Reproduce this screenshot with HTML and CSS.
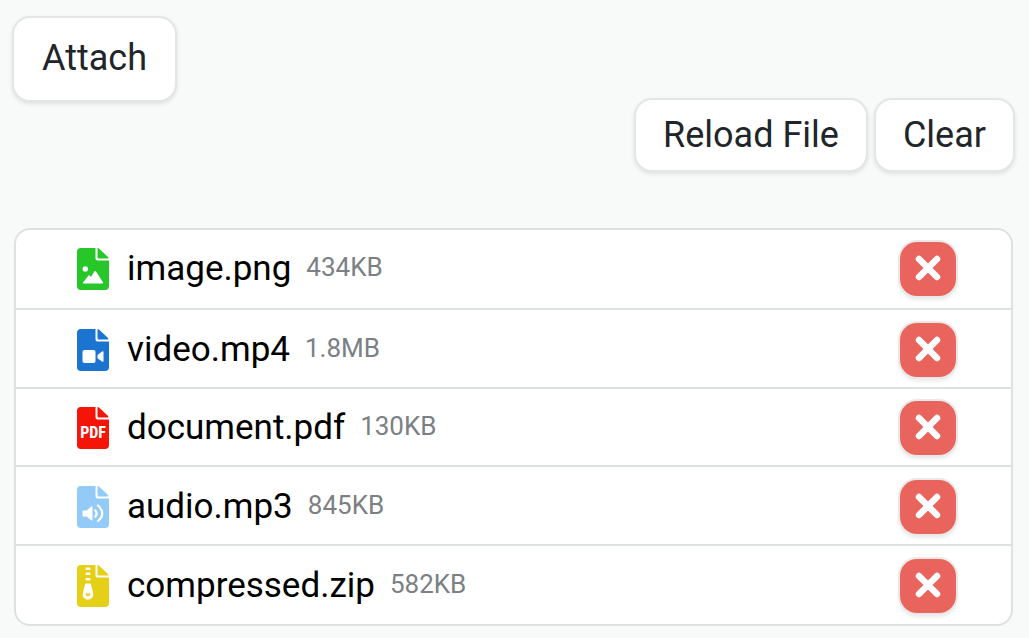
FILE: index.html
```
<!DOCTYPE html>
<html lang="en">
<head>
<meta charset="utf-8">
<meta name="viewport" content="width=device-width, initial-scale=1">
<title>Attachments</title>
<link rel="stylesheet" href="styles.css">
</head>
<body>
<svg class="defs" aria-hidden="true">
  <symbol id="page" viewBox="0 0 32 42">
    <path d="M4 0H18.500V10.500Q18.500 12.500 20.500 12.500H32V38Q32 42 28 42H4Q0 42 0 38V4Q0 0 4 0Z"/>
    <path d="M20.500 0Q21.500 0 22.500 1L31 9Q32 10.500 31 10.500H22Q20.500 10.500 20.500 9Z"/>
  </symbol>
  <symbol id="cross" viewBox="0 0 26 26">
    <path d="M4 4L22 22M22 4L4 22" fill="none" stroke="#fff" stroke-width="6.5" stroke-linecap="round"/>
  </symbol>
</svg>
<main class="page">
  <button class="btn btn-attach" type="button">Attach</button>
  <div class="actions">
    <button class="btn" type="button">Reload File</button>
    <button class="btn" type="button">Clear</button>
  </div>
  <ul class="files">
    <li class="file">
      <svg class="icon image" viewBox="0 0 32 42" aria-hidden="true"><use href="#page"/>
        <g fill="#fff"><circle cx="8.3" cy="21" r="2.7"/><path d="M6.5 35.5Q5.5 35.5 6 34.5L11.5 27.5Q12.2 26.8 13 27.8L14 29L17.3 23.5Q18.1 22.5 19 23.5L26 34.3Q26.5 35.5 25.3 35.5Z"/></g></svg>
      <span class="name">image.png</span><span class="size">434KB</span>
      <button class="remove" type="button" aria-label="Remove image.png"><svg class="cross"><use href="#cross"/></svg></button>
    </li>
    <li class="file">
      <svg class="icon video" viewBox="0 0 32 42" aria-hidden="true"><use href="#page"/>
        <g fill="#fff"><rect x="5.5" y="21" width="13" height="13" rx="2"/><path d="M20.5 26L25 22.5Q26.5 21.8 26.5 23V32Q26.5 33.2 25 32.5L20.5 29.2Z"/></g></svg>
      <span class="name">video.mp4</span><span class="size">1.8MB</span>
      <button class="remove" type="button" aria-label="Remove video.mp4"><svg class="cross"><use href="#cross"/></svg></button>
    </li>
    <li class="file">
      <svg class="icon pdf" viewBox="0 0 32 42" aria-hidden="true"><use href="#page"/>
        <text class="pdf-label" x="16" y="31" text-anchor="middle">PDF</text></svg>
      <span class="name">document.pdf</span><span class="size">130KB</span>
      <button class="remove" type="button" aria-label="Remove document.pdf"><svg class="cross"><use href="#cross"/></svg></button>
    </li>
    <li class="file">
      <svg class="icon audio" viewBox="0 0 32 42" aria-hidden="true"><use href="#page"/>
        <path fill="#fff" d="M6.500 24.500H9.500L14.200 20.600Q15.500 20 15.500 21.300V33.700Q15.500 35 14.200 34.300L9.500 30.500H6.500Q5.500 30.500 5.500 29.500V25.500Q5.500 24.500 6.500 24.500Z"/>
        <path fill="none" stroke="#fff" stroke-width="2.2" stroke-linecap="round" d="M18.300 24.300Q21 27.500 18.300 30.700M21 19.500Q29.500 27.500 21 35"/></svg>
      <span class="name">audio.mp3</span><span class="size">845KB</span>
      <button class="remove" type="button" aria-label="Remove audio.mp3"><svg class="cross"><use href="#cross"/></svg></button>
    </li>
    <li class="file">
      <svg class="icon zip" viewBox="0 0 32 42" aria-hidden="true"><use href="#page"/>
        <g fill="#fff"><rect x="8.500" y="2.500" width="5" height="2.500" rx="1"/><rect x="8.500" y="7.500" width="5" height="2.500" rx="1"/><rect x="8.500" y="13" width="5" height="2.500" rx="1"/><path fill-rule="evenodd" d="M9 18.500H13Q13.800 18.500 14 19.500L16 27.500C17.200 32 14.500 34.500 11 34.500S4.800 32 6 27.500L8 19.500Q8.200 18.500 9 18.500ZM8.500 28.500H13.500V29Q13.500 31 11 31T8.500 29Z"/></g></svg>
      <span class="name">compressed.zip</span><span class="size">582KB</span>
      <button class="remove" type="button" aria-label="Remove compressed.zip"><svg class="cross"><use href="#cross"/></svg></button>
    </li>
  </ul>
</main>
</body>
</html>
```
FILE: styles.css
```
* {
  box-sizing: border-box;
}

body {
  margin: 0;
  background: #f8faf9;
  color: #000;
  font-family: Roboto, "Liberation Sans", sans-serif;
}

.defs {
  display: none;
}

.page {
  display: flex;
  flex-direction: column;
  min-height: 100vh;
  padding: 16px 14px 12px 12px;
}

.btn {
  padding: 14px 27px;
  border: 2px solid #e4e6e6;
  border-radius: 18px;
  background: #fff;
  box-shadow: 0 2px 4px rgba(0, 0, 0, 0.1);
  color: #212529;
  font: 36px/42px Roboto, "Liberation Sans", sans-serif;
}

.btn-attach {
  align-self: flex-start;
  padding: 19px 28px 21px;
}

.actions {
  display: flex;
  justify-content: flex-end;
  gap: 6px;
  margin: -4px 0 56px;
}

.files {
  display: grid;
  flex: 1;
  grid-auto-rows: 1fr;
  margin: 0 2px;
  padding: 0;
  overflow: hidden;
  border: 2px solid #dee1e1;
  border-radius: 16px;
  background: #fff;
  list-style: none;
}

.file {
  display: flex;
  align-items: center;
  padding: 0 55px 0 61px;
}

.file + .file {
  padding-top: 2px;
  border-top: 1px solid #dee1e1;
  box-shadow: 0 -1px 0 #dee1e1;
}

.icon {
  width: 32px;
  height: 42px;
  margin-right: 18px;
}

.image { fill: #27c629; }
.video { fill: #1b74d0; }
.pdf { fill: #f41408; }
.audio { fill: #92caf8; }
.zip { fill: #e6cf17; }

.pdf-label {
  fill: #fff;
  font: bold 16px "Roboto Condensed", Roboto, sans-serif;
}

.name {
  font-size: 35px;
  line-height: 42px;
}

.size {
  margin-left: 15px;
  padding-bottom: 4px;
  color: #7b8085;
  font-size: 26px;
  line-height: 38px;
}

.remove {
  display: grid;
  place-items: center;
  width: 56px;
  height: 54px;
  margin-left: auto;
  padding: 0 0 2px;
  border: 0;
  border-radius: 17px;
  background: #ea645e;
  box-shadow: 0 0 0 2px #ebe8e8, 0 3px 5px rgba(0, 0, 0, 0.12);
}

.cross {
  width: 26px;
  height: 26px;
}
```
